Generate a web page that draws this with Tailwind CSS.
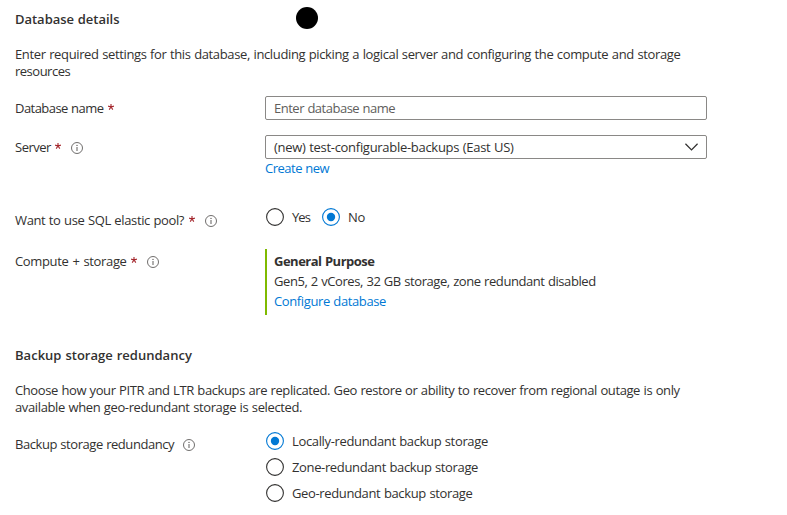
<!DOCTYPE html>
<html lang="en">
<head>
<meta charset="utf-8">
<title>Create SQL Database</title>
<script src="https://cdn.jsdelivr.net/npm/@tailwindcss/browser@4"></script>
</head>
<body class="bg-white text-[#323130] font-['Open_Sans','Noto_Sans',sans-serif] text-[13px] leading-[17px] [word-spacing:0.5px] whitespace-nowrap overflow-hidden">
<svg class="hidden">
  <symbol id="info" viewBox="0 0 12 12">
    <circle cx="6" cy="6" r="5.5" fill="none" stroke="#605e5c" stroke-width="0.9"/>
    <rect x="5.5" y="5" width="1" height="4" fill="#605e5c"/>
    <rect x="5.4" y="2.9" width="1.2" height="1.1" fill="#605e5c"/>
  </symbol>
  <symbol id="star" viewBox="0 0 6 6">
    <path d="M3 0V3M3 3L0.1 2.1M3 3L5.9 2.1M3 3L1.2 5.6M3 3L4.8 5.6" fill="none" stroke="#a4262c" stroke-width="1.1"/>
  </symbol>
  <symbol id="off" viewBox="0 0 18 18">
    <circle cx="9" cy="9" r="8.4" fill="none" stroke="#323130" stroke-width="1.1"/>
  </symbol>
  <symbol id="on" viewBox="0 0 18 18">
    <circle cx="9" cy="9" r="8.4" fill="none" stroke="#0078d4" stroke-width="1.1"/>
    <circle cx="9" cy="9" r="4.2" fill="#0078d4"/>
  </symbol>
</svg>
<main class="w-[787px] h-[515px] pl-[15px] pt-[7px] flex flex-col">
  <section>
    <header class="flex h-[22px] items-center">
      <h2 class="w-[281px] pt-[2px] font-semibold tracking-[-0.03px]">Database details</h2>
      <span class="size-[22px] rounded-full bg-black"></span>
    </header>
    <p class="mt-[17px]"><span class="tracking-[-0.362px]">Enter required settings for this database, including picking a logical server and configuring the compute and storage</span><br><span class="tracking-[-0.5px]">resources</span></p>

    <div class="mt-[16px] flex items-start">
      <div class="w-[250px] pt-[4px] flex">
        <span class="w-[89px] tracking-[-0.55px]">Database name</span>
        <svg class="size-[6px] ml-[4px] mt-[4px]"><use href="#star"/></svg>
      </div>
      <div class="w-[442px] h-[24px] border border-[#8a8886] rounded-[2px] px-[8px] flex items-center text-[#605e5c]"><span class="tracking-[-0.49px]">Enter database name</span></div>
    </div>

    <div class="mt-[15px] flex items-start">
      <div class="w-[250px] pt-[4px] flex">
        <span class="w-[36px] tracking-[-0.5px]">Server</span>
        <svg class="size-[6px] ml-[4px] mt-[4px]"><use href="#star"/></svg>
        <svg class="size-[12px] ml-[10px] mt-[3px]"><use href="#info"/></svg>
      </div>
      <div>
        <div class="w-[442px] h-[24px] border border-[#8a8886] rounded-[2px] pl-[8px] pr-[8px] flex items-center justify-between">
          <span class="tracking-[-0.29px]">(new) test-configurable-backups (East US)</span>
          <svg class="w-[13px] h-[8px]" viewBox="0 0 13 8"><path d="M0.4 0.8L6.5 6.9L12.6 0.8" fill="none" stroke="#323130" stroke-width="1.3"/></svg>
        </div>
        <a class="block mt-[1px] text-[#0078d4] tracking-[-0.5px]">Create new</a>
      </div>
    </div>

    <div class="mt-[31px] flex items-start">
      <div class="w-[250px] pt-[4px] flex">
        <span class="w-[170px] tracking-[-0.37px]">Want to use SQL elastic pool?</span>
        <svg class="size-[6px] ml-[4px] mt-[4px]"><use href="#star"/></svg>
        <svg class="size-[12px] ml-[10px] mt-[3px]"><use href="#info"/></svg>
      </div>
      <div class="flex items-center h-[18px] pl-[1px]">
        <svg class="size-[18px]"><use href="#off"/></svg>
        <span class="ml-[8px] w-[30px] tracking-[-0.9px]">Yes</span>
        <svg class="size-[18px]"><use href="#on"/></svg>
        <span class="ml-[8px] tracking-[-0.3px]">No</span>
      </div>
    </div>

    <div class="mt-[20px] flex items-start">
      <div class="w-[250px] pt-[4px] flex">
        <span class="w-[112px] tracking-[-0.36px] [word-spacing:1px]">Compute + storage</span>
        <svg class="size-[6px] ml-[4px] mt-[4px]"><use href="#star"/></svg>
        <svg class="size-[12px] ml-[10px] mt-[3px]"><use href="#info"/></svg>
      </div>
      <div class="h-[66px] border-l-2 border-[#7fba00] pl-[7px] pt-[2px] leading-[20px]">
        <div class="font-bold tracking-[-0.5px]">General Purpose</div>
        <div class="tracking-[-0.43px]">Gen5, 2 vCores, 32 GB storage, zone redundant disabled</div>
        <a class="block text-[#0078d4] tracking-[-0.38px]">Configure database</a>
      </div>
    </div>
  </section>

  <section class="mt-[32px]">
    <h2 class="font-semibold tracking-[0.02px]">Backup storage redundancy</h2>
    <p class="mt-[18px]"><span class="tracking-[-0.395px]">Choose how your PITR and LTR backups are replicated. Geo restore or ability to recover from regional outage is only</span><br><span class="tracking-[-0.37px]">available when geo-redundant storage is selected.</span></p>
    <div class="mt-[16px] flex items-start">
      <div class="w-[250px] pt-[4px] flex">
        <span class="w-[159px] tracking-[-0.45px]">Backup storage redundancy</span>
        <svg class="size-[12px] ml-[9px] mt-[3px]"><use href="#info"/></svg>
      </div>
      <div class="flex flex-col gap-[8px] pl-[1px]">
        <div class="flex items-center gap-[8px] h-[18px]"><svg class="size-[18px]"><use href="#on"/></svg><span class="tracking-[-0.35px]">Locally-redundant backup storage</span></div>
        <div class="flex items-center gap-[8px] h-[18px]"><svg class="size-[18px]"><use href="#off"/></svg><span class="tracking-[-0.36px]">Zone-redundant backup storage</span></div>
        <div class="flex items-center gap-[8px] h-[18px]"><svg class="size-[18px]"><use href="#off"/></svg><span class="tracking-[-0.36px]">Geo-redundant backup storage</span></div>
      </div>
    </div>
  </section>
</main>
</body>
</html>
